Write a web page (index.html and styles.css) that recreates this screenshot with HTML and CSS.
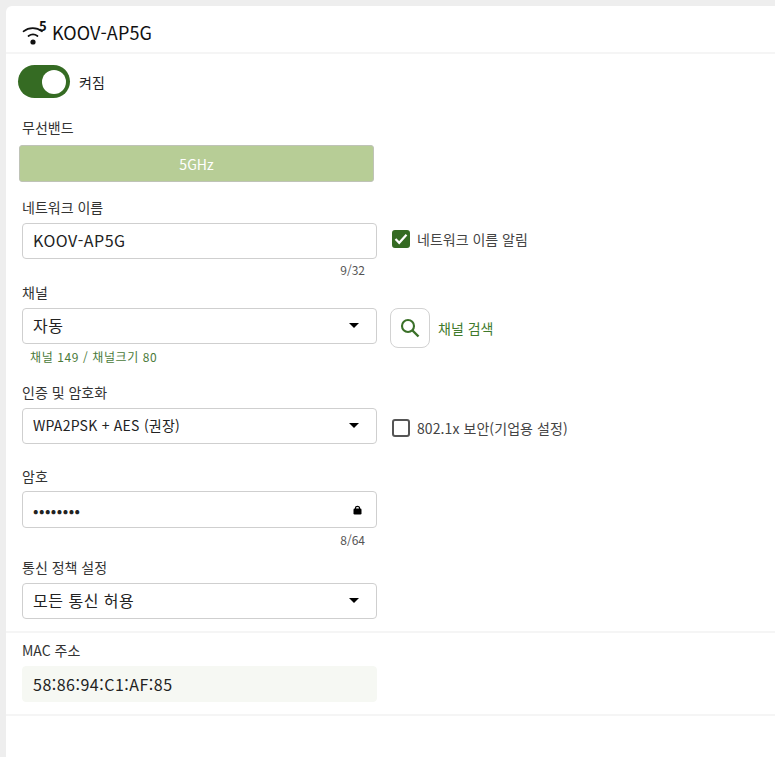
FILE: index.html
```html
<!DOCTYPE html>
<html lang="ko">
<head>
<meta charset="utf-8">
<title>KOOV-AP5G</title>
<link rel="stylesheet" href="styles.css">
</head>
<body>
<main class="card">
  <header class="head">
    <span class="wifi">
      <svg class="wifi-svg" width="26" height="26" viewBox="0 0 26 26"><path d="M1.500 12.300C7 8 14.500 8 20 12.300M6.500 17C9.500 14.800 12.500 14.800 15.500 17" fill="none" stroke="#111" stroke-width="1.700" stroke-linecap="round"/><circle cx="11" cy="23" r="2.600" fill="#111"/></svg>
      <span class="wifi-num">5</span>
    </span>
    <h1 class="title">KOOV-AP5G</h1>
  </header>
  <div class="toggle-row">
    <span class="toggle"><span class="knob"></span></span>
    <span class="toggle-label">켜짐</span>
  </div>
  <div class="label band-label">무선밴드</div>
  <button class="band">5GHz</button>

  <div class="label net-label">네트워크 이름</div>
  <div class="row">
    <div class="box text16 raised">KOOV-AP5G</div>
    <label class="check check-up"><span class="cb on"><svg width="14" height="12" viewBox="0 0 14 12"><path d="M1.500 6L5.200 9.800L12.500 1.800" fill="none" stroke="#fff" stroke-width="2.200"/></svg></span>네트워크 이름 알림</label>
  </div>
  <div class="count">9/32</div>

  <div class="label">채널</div>
  <div class="row row-top">
    <div class="box text16 select raised">자동<span class="caret"></span></div>
    <button class="search"><svg width="22" height="22" viewBox="0 0 22 22"><circle cx="9" cy="9" r="6" fill="none" stroke="#3a7028" stroke-width="2.100"/><path d="M13.500 13.500L19.500 19.500" stroke="#3a7028" stroke-width="2.400"/></svg></button>
    <span class="search-text">채널 검색</span>
  </div>
  <div class="hint">채널 149 / 채널크기 80</div>

  <div class="label auth-label">인증 및 암호화</div>
  <div class="row">
    <div class="box text14 select raised">WPA2PSK + AES (권장)<span class="caret"></span></div>
    <label class="check check-down"><span class="cb"></span>802.1x 보안(기업용 설정)</label>
  </div>

  <div class="label pw-label">암호</div>
  <div class="box pw"><span class="dots">••••••••</span>
    <svg class="lock" width="9" height="10" viewBox="0 0 9 10"><path d="M2.500 4V2.800C2.500 .8 6.500 .8 6.500 2.800V4" fill="none" stroke="#000" stroke-width="1.200"/><rect x=".5" y="3.500" width="8" height="6" rx="1.200" fill="#000"/></svg>
  </div>
  <div class="count count-pw">8/64</div>

  <div class="label policy-label">통신 정책 설정</div>
  <div class="box text16 select raised">모든 통신 허용<span class="caret"></span></div>

  <hr class="rule first">
  <div class="label mac-label">MAC 주소</div>
  <div class="box text16 readonly">58:86:94:C1:AF:85</div>
  <hr class="rule second">
</main>
</body>
</html>
```
FILE: styles.css
```css
* { box-sizing: border-box; }
html, body { margin: 0; height: 757px; overflow: hidden; }
body {
  background: #eeeeee;
  padding: 6px 0 0 6px;
  font-family: "Noto Sans CJK KR", "Noto Sans", sans-serif;
  color: #222;
}
.card {
  background: #fff;
  height: 751px;
  border-top-left-radius: 6px;
  display: flex;
  flex-direction: column;
  align-items: flex-start;
}
.head {
  width: 100%;
  height: 48px;
  border-bottom: 2px solid #f5f5f5;
  display: flex;
  align-items: center;
  padding: 6px 0 0 16px;
}
.wifi { display: flex; width: 30px; height: 26px; position: relative; }
.wifi-num { position: absolute; left: 17px; top: 0; font-size: 13px; line-height: 14px; font-weight: 700; color: #111; }
.title { margin: 0; font-size: 18px; font-weight: 400; line-height: 26px; color: #111; letter-spacing: .1px; }
.toggle-row { display: flex; align-items: center; margin: 11px 0 0 12px; height: 33px; }
.toggle {
  width: 52px; height: 33px; border-radius: 17px; background: #356b23;
  display: flex; align-items: center; justify-content: flex-end; padding-right: 4px;
}
.knob { width: 24px; height: 24px; border-radius: 50%; background: #fff; }
.toggle-label { margin-left: 9px; font-size: 14px; line-height: 18px; color: #222; }
.label { margin-left: 16px; font-size: 14px; line-height: 19px; color: #333; height: 20px; }
.band-label { margin-top: 20px; }
.band {
  margin: 7px 0 0 13px; width: 355px; height: 37px; display: block;
  background: #b7cd96; border: 1px solid #bfc3b7; border-radius: 3px;
  color: #fff; font: 14px/20px "Noto Sans CJK KR", sans-serif; padding: 0;
}
.net-label { margin-top: 16px; }
.row { display: flex; align-items: center; margin: 5px 0 0 16px; }
.row-top { align-items: flex-start; }
.box {
  width: 355px; height: 36px; border: 1px solid #cfcfcf; border-radius: 4px;
  background: #fff; display: flex; align-items: center; padding: 0 10px; color: #222; flex: none;
}
.card > .box { margin: 5px 0 0 16px; }
.raised { padding-bottom: 2px; }
.text16 { font-size: 16px; letter-spacing: .5px; }
.text14 { font-size: 14px; letter-spacing: .25px; }
.select { justify-content: space-between; padding-right: 17px; }
.caret { width: 0; height: 0; border: 5px solid transparent; border-top: 5px solid #000; border-bottom: 0; }
.check { display: flex; align-items: center; margin-left: 15px; font-size: 14px; color: #444; }
.check-up { margin-bottom: 5px; }
.check-down { margin-top: 4px; letter-spacing: .08px; }
.cb {
  width: 18px; height: 18px; border: 2px solid #555; border-radius: 3px; margin-right: 7px;
  display: flex; align-items: center; justify-content: center;
}
.cb.on { background: #356b23; border-color: #356b23; }
.count { width: 343px; margin: 1px 0 0 16px; text-align: right; font-size: 12px; line-height: 20px; height: 20px; color: #555; }
.count + .label { margin-top: 3px; }
.search {
  width: 40px; height: 40px; margin: 0 0 0 13px; padding: 0; background: #fff;
  border: 1px solid #d2d2d2; border-radius: 8px; display: flex; align-items: center; justify-content: center;
}
.search-text { margin: 10px 0 0 8px; font-size: 14px; line-height: 20px; color: #3f7a2c; }
.hint { margin: 0 0 0 24px; font-size: 12px; line-height: 18px; height: 18px; color: #4a7a3a; letter-spacing: .6px; }
.auth-label { margin-top: 17px; }
.pw-label { margin-top: 23px; }
.card > .pw { height: 37px; margin-top: 4px; justify-content: space-between; padding-right: 14px; font-size: 16px; letter-spacing: .5px; }
.dots { color: #222; }
.count-pw { margin-top: 2px; }
.count + .policy-label { margin-top: 8px; }
.rule { width: 100%; margin: 0; border: 0; height: 2px; background: #f5f5f5; flex: none; }
.first { margin-top: 12px; }
.mac-label { margin-top: 8px; }
.readonly { background: #f6f8f3; border-color: #f6f8f3; }
.second { margin-top: 12px; }
```
